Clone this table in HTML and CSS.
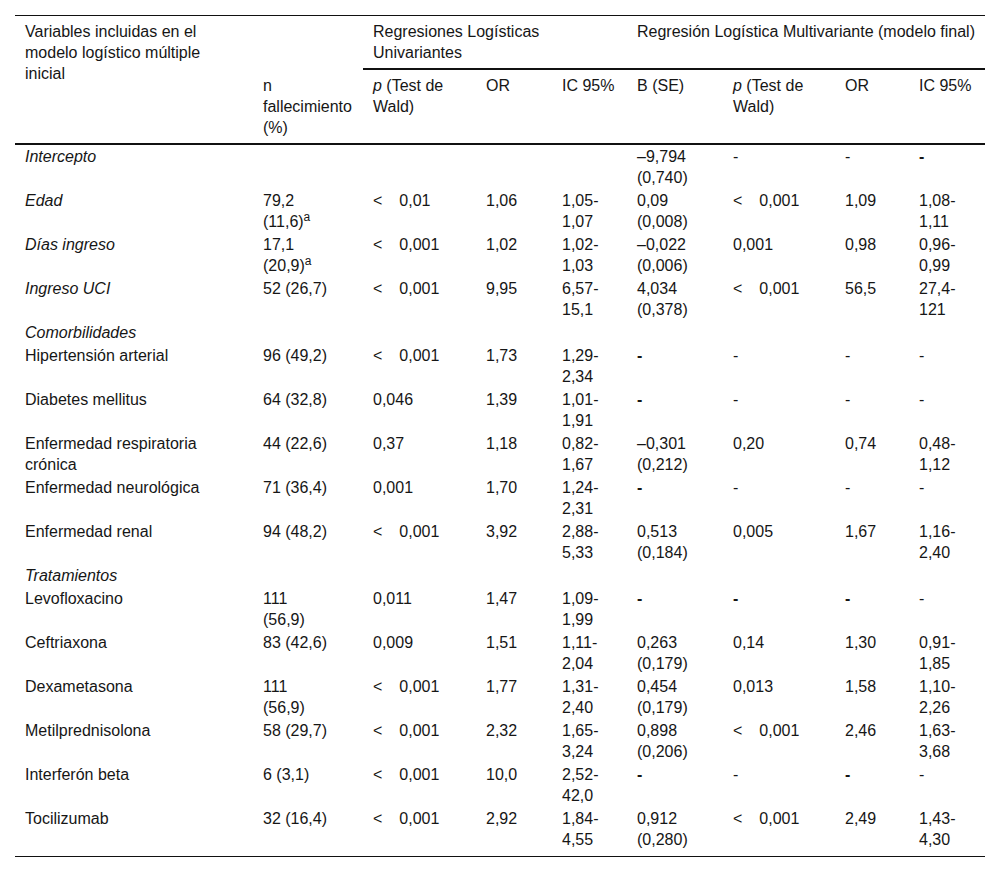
FILE: index.html
```html
<!DOCTYPE html>
<html lang="es">
<head>
<meta charset="utf-8">
<title>Regresión logística</title>
<link rel="stylesheet" href="styles.css">
</head>
<body>
<table class="tbl">
  <colgroup>
    <col class="c1"><col class="c2"><col class="c3"><col class="c4"><col class="c5"><col class="c6"><col class="c7"><col class="c8"><col class="c9">
  </colgroup>
  <thead>
    <tr class="h1">
      <th rowspan="2" class="hvar v">Variables incluidas en el modelo logístico múltiple inicial</th>
      <th class="hblank"></th>
      <th colspan="3" class="hgroup">Regresiones Logísticas Univariantes</th>
      <th colspan="4" class="hgroup hwide">Regresión Logística Multivariante (modelo final)</th>
    </tr>
    <tr class="h2">
      <th class="n">n fallecimiento (%)</th>
      <th><i>p</i> (Test de Wald)</th>
      <th>OR</th>
      <th>IC 95%</th>
      <th>B (SE)</th>
      <th><i>p</i> (Test de Wald)</th>
      <th>OR</th>
      <th>IC 95%</th>
    </tr>
  </thead>
  <tbody>
    <tr>
      <td class="v"><i>Intercepto</i></td><td class="n"></td><td></td><td></td><td></td>
      <td>–9,794 (0,740)</td><td>-</td><td>-</td><td><b>-</b></td>
    </tr>
    <tr>
      <td class="v"><i>Edad</i></td><td class="n">79,2 (11,6)<sup>a</sup></td><td><span class="lt">&lt;</span>0,01</td><td>1,06</td><td>1,05-1,07</td>
      <td>0,09 (0,008)</td><td><span class="lt">&lt;</span>0,001</td><td>1,09</td><td>1,08-1,11</td>
    </tr>
    <tr>
      <td class="v"><i>Días ingreso</i></td><td class="n">17,1 (20,9)<sup>a</sup></td><td><span class="lt">&lt;</span>0,001</td><td>1,02</td><td>1,02-1,03</td>
      <td>–0,022 (0,006)</td><td>0,001</td><td>0,98</td><td>0,96-0,99</td>
    </tr>
    <tr>
      <td class="v"><i>Ingreso UCI</i></td><td class="n">52 (26,7)</td><td><span class="lt">&lt;</span>0,001</td><td>9,95</td><td>6,57-15,1</td>
      <td>4,034 (0,378)</td><td><span class="lt">&lt;</span>0,001</td><td>56,5</td><td>27,4-121</td>
    </tr>
    <tr>
      <td class="v"><i>Comorbilidades</i></td><td class="n"></td><td></td><td></td><td></td><td></td><td></td><td></td><td></td>
    </tr>
    <tr>
      <td class="v">Hipertensión arterial</td><td class="n">96 (49,2)</td><td><span class="lt">&lt;</span>0,001</td><td>1,73</td><td>1,29-2,34</td>
      <td><b>-</b></td><td>-</td><td>-</td><td>-</td>
    </tr>
    <tr>
      <td class="v">Diabetes mellitus</td><td class="n">64 (32,8)</td><td>0,046</td><td>1,39</td><td>1,01-1,91</td>
      <td><b>-</b></td><td>-</td><td>-</td><td>-</td>
    </tr>
    <tr>
      <td class="v">Enfermedad respiratoria crónica</td><td class="n">44 (22,6)</td><td>0,37</td><td>1,18</td><td>0,82-1,67</td>
      <td>–0,301 (0,212)</td><td>0,20</td><td>0,74</td><td>0,48-1,12</td>
    </tr>
    <tr>
      <td class="v">Enfermedad neurológica</td><td class="n">71 (36,4)</td><td>0,001</td><td>1,70</td><td>1,24-2,31</td>
      <td><b>-</b></td><td>-</td><td>-</td><td>-</td>
    </tr>
    <tr>
      <td class="v">Enfermedad renal</td><td class="n">94 (48,2)</td><td><span class="lt">&lt;</span>0,001</td><td>3,92</td><td>2,88-5,33</td>
      <td>0,513 (0,184)</td><td>0,005</td><td>1,67</td><td>1,16-2,40</td>
    </tr>
    <tr>
      <td class="v"><i>Tratamientos</i></td><td class="n"></td><td></td><td></td><td></td><td></td><td></td><td></td><td></td>
    </tr>
    <tr>
      <td class="v">Levofloxacino</td><td class="n">111 (56,9)</td><td>0,011</td><td>1,47</td><td>1,09-1,99</td>
      <td><b>-</b></td><td><b>-</b></td><td><b>-</b></td><td>-</td>
    </tr>
    <tr>
      <td class="v">Ceftriaxona</td><td class="n">83 (42,6)</td><td>0,009</td><td>1,51</td><td>1,11-2,04</td>
      <td>0,263 (0,179)</td><td>0,14</td><td>1,30</td><td>0,91-1,85</td>
    </tr>
    <tr>
      <td class="v">Dexametasona</td><td class="n">111 (56,9)</td><td><span class="lt">&lt;</span>0,001</td><td>1,77</td><td>1,31-2,40</td>
      <td>0,454 (0,179)</td><td>0,013</td><td>1,58</td><td>1,10-2,26</td>
    </tr>
    <tr>
      <td class="v">Metilprednisolona</td><td class="n">58 (29,7)</td><td><span class="lt">&lt;</span>0,001</td><td>2,32</td><td>1,65-3,24</td>
      <td>0,898 (0,206)</td><td><span class="lt">&lt;</span>0,001</td><td>2,46</td><td>1,63-3,68</td>
    </tr>
    <tr>
      <td class="v">Interferón beta</td><td class="n">6 (3,1)</td><td><span class="lt">&lt;</span>0,001</td><td>10,0</td><td>2,52-42,0</td>
      <td><b>-</b></td><td>-</td><td><b>-</b></td><td>-</td>
    </tr>
    <tr class="last">
      <td class="v">Tocilizumab</td><td class="n">32 (16,4)</td><td><span class="lt">&lt;</span>0,001</td><td>2,92</td><td>1,84-4,55</td>
      <td>0,912 (0,280)</td><td><span class="lt">&lt;</span>0,001</td><td>2,49</td><td>1,43-4,30</td>
    </tr>
  </tbody>
</table>
</body>
</html>
```

FILE: styles.css
```css
html, body {
  margin: 0;
  padding: 0;
  background: #ffffff;
}

body {
  padding: 15px;
  font-family: "Liberation Sans", Arial, Helvetica, sans-serif;
  font-size: 16px;
  line-height: 21px;
  color: #161616;
}

.tbl {
  width: 970px;
  table-layout: fixed;
  border-collapse: separate;
  border-spacing: 0;
  border-top: 1px solid #111;
  border-bottom: 1px solid #111;
}

col.c1 { width: 238px; }
col.c2 { width: 110px; }
col.c3 { width: 113px; }
col.c4 { width: 76px; }
col.c5 { width: 75px; }
col.c6 { width: 96px; }
col.c7 { width: 112px; }
col.c8 { width: 74px; }
col.c9 { width: 76px; }

th, td {
  text-align: left;
  vertical-align: top;
  font-weight: normal;
  padding: 1px 6px 1px 10px;
  overflow-wrap: normal;
}

th {
  padding-top: 5px;
  padding-bottom: 5px;
}

th.v, td.v {
  padding-right: 22px;
}

.h1 .hgroup {
  border-bottom: 2px solid #111;
}

.h1 .hwide {
  padding-right: 0;
}

.hvar {
  border-bottom: 2px solid #111;
}

.h2 th {
  border-bottom: 2px solid #111;
}

th.n, td.n {
  padding-right: 32px;
}

.lt {
  display: inline-block;
  margin-right: 17px;
}

sup {
  font-size: 12px;
  line-height: 0;
  vertical-align: baseline;
  position: relative;
  top: -6px;
}

b {
  font-weight: bold;
}

.last td {
  padding-bottom: 6px;
}
```
